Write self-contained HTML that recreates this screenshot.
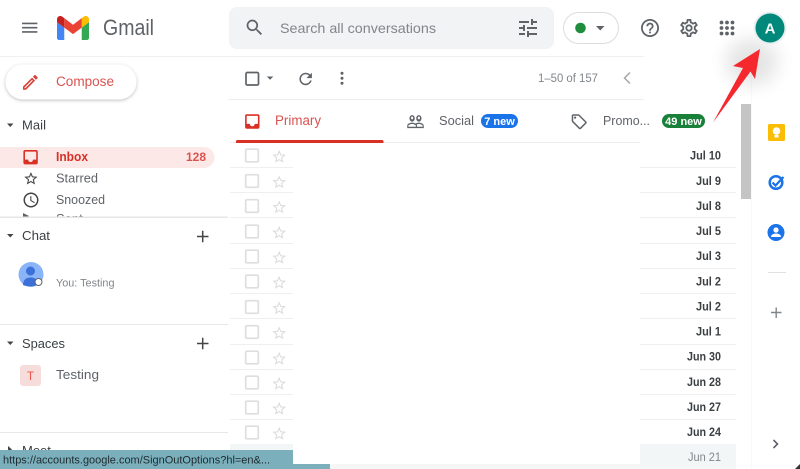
<!DOCTYPE html>
<html><head><meta charset="utf-8"><title>Gmail</title>
<style>
html,body{margin:0;padding:0;background:#fff;width:800px;height:469px;overflow:hidden}
svg{display:block;position:absolute;left:0;top:0}
text{font-family:"Liberation Sans",sans-serif}
</style></head><body>
<svg width="800" height="469" viewBox="0 0 800 469" xmlns="http://www.w3.org/2000/svg">
<defs>
<filter id="sh" x="-20%" y="-40%" width="140%" height="200%"><feDropShadow dx="0" dy="1" stdDeviation="1.5" flood-color="#3c4043" flood-opacity=".35"/></filter>
<filter id="bl" x="-50%" y="-50%" width="200%" height="200%"><feGaussianBlur stdDeviation="9"/></filter>
<path id="star" d="M22 9.240l-7.190-.62L12 2 9.190 8.630 2 9.240l5.460 4.730L5.820 21 12 17.270 18.180 21l-1.630-7.030L22 9.240zM12 15.400l-3.760 2.270 1-4.280-3.320-2.880 4.380-.38L12 6.100l1.710 4.040 4.380.38-3.320 2.880 1 4.280L12 15.400z"/>
<g id="rw"><rect x="245.700" y="-5.800" width="12.600" height="12.600" rx="1.200" fill="none" stroke="#dedede" stroke-width="1.700"/><use href="#star" fill="#dcdcdc" transform="translate(271 -6.500) scale(.68)"/></g>
<path id="inb" d="M19 3H5c-1.100 0-2 .9-2 2v14c0 1.100.9 2 2 2h14c1.100 0 2-.9 2-2V5c0-1.100-.9-2-2-2zm0 12h-4c0 1.660-1.340 3-3 3s-3-1.340-3-3H5V5h14v10z"/>
</defs>

<!-- row separators -->
<g stroke="#eef0f0" stroke-width="1">
<path d="M230 167.500H293M640 167.500H736M230 192.500H293M640 192.500H736M230 217.500H293M640 217.500H736M230 243.500H293M640 243.500H736M230 268.500H293M640 268.500H736M230 293.500H293M640 293.500H736M230 318.500H293M640 318.500H736M230 344.500H293M640 344.500H736M230 369.500H293M640 369.500H736M230 394.500H293M640 394.500H736M230 419.500H293M640 419.500H736"/>
</g>
<rect x="640" y="444" width="96" height="25" fill="#f2f6f6"/>
<rect x="230" y="444" width="63" height="7" fill="#f2f6f6"/>

<!-- rows -->
<use href="#rw" y="155"/><use href="#rw" y="180.500"/><use href="#rw" y="205.500"/><use href="#rw" y="231"/><use href="#rw" y="256"/><use href="#rw" y="281"/><use href="#rw" y="306.500"/><use href="#rw" y="331.500"/><use href="#rw" y="357"/><use href="#rw" y="382"/><use href="#rw" y="407"/><use href="#rw" y="432"/>
<g font-size="12" font-weight="700" fill="#3c4043" text-anchor="end" lengthAdjust="spacingAndGlyphs">
<text x="721" y="159.500" textLength="31" lengthAdjust="spacingAndGlyphs">Jul 10</text><text x="721" y="185" textLength="25" lengthAdjust="spacingAndGlyphs">Jul 9</text><text x="721" y="210" textLength="25" lengthAdjust="spacingAndGlyphs">Jul 8</text><text x="721" y="235" textLength="25" lengthAdjust="spacingAndGlyphs">Jul 5</text><text x="721" y="260" textLength="25" lengthAdjust="spacingAndGlyphs">Jul 3</text><text x="721" y="285.500" textLength="25" lengthAdjust="spacingAndGlyphs">Jul 2</text><text x="721" y="310.500" textLength="25" lengthAdjust="spacingAndGlyphs">Jul 2</text><text x="721" y="335.500" textLength="25" lengthAdjust="spacingAndGlyphs">Jul 1</text><text x="721" y="360.500" textLength="34" lengthAdjust="spacingAndGlyphs">Jun 30</text><text x="721" y="386" textLength="34" lengthAdjust="spacingAndGlyphs">Jun 28</text><text x="721" y="411" textLength="34" lengthAdjust="spacingAndGlyphs">Jun 27</text><text x="721" y="436" textLength="34" lengthAdjust="spacingAndGlyphs">Jun 24</text>
<text x="721" y="461" font-weight="400" fill="#80868b" textLength="33" lengthAdjust="spacingAndGlyphs">Jun 21</text>
</g>

<!-- scrollbar -->
<rect x="741" y="104" width="10" height="95" fill="#c4c4c4"/>
<rect x="751" y="57" width="1" height="412" fill="#f9f9f9"/>

<!-- header -->
<rect x="0" y="56" width="644" height="1" fill="#eff0f0"/>
<path transform="translate(19.500 17.500) scale(.85)" fill="#5f6368" d="M3 18h18v-2H3v2zm0-5h18v-2H3v2zm0-7v2h18V6H3z"/>
<g transform="translate(57 16) scale(.3636) translate(-52 -42)">
<path fill="#4285f4" d="M58 108h14V74L52 59v43c0 3.320 2.690 6 6 6"/>
<path fill="#34a853" d="M120 108h14c3.320 0 6-2.690 6-6V59l-20 15"/>
<path fill="#fbbc04" d="M120 48v26l20-15v-8c0-7.420-8.470-11.650-14.400-7.200"/>
<path fill="#ea4335" d="M72 74V48l24 18 24-18v26L96 92"/>
<path fill="#c5221f" d="M52 51v8l20 15V48l-5.600-4.200c-5.940-4.450-14.400-.22-14.400 7.200"/>
</g>
<text x="103" y="35" font-size="22" fill="#5f6368" textLength="51" lengthAdjust="spacingAndGlyphs">Gmail</text>

<rect x="229" y="7" width="325" height="42" rx="8" fill="#f1f3f4"/>
<path transform="translate(244 17) scale(.88)" fill="#5f6368" d="M15.500 14h-.79l-.28-.27A6.471 6.471 0 0 0 16 9.500 6.500 6.500 0 1 0 9.500 16c1.610 0 3.090-.59 4.230-1.570l.27.28v.79l5 4.990L20.490 19l-4.990-5zm-6 0C7.010 14 5 11.990 5 9.500S7.010 5 9.500 5 14 7.010 14 9.500 11.990 14 9.500 14z"/>
<text x="280" y="33" font-size="14" fill="#80868b" textLength="156" lengthAdjust="spacingAndGlyphs">Search all conversations</text>
<path transform="translate(516 16)" fill="#5f6368" d="M3 17v2h6v-2H3zM3 5v2h10V5H3zm10 16v-2h8v-2h-8v-2h-2v6h2zM7 9v2H3v2h4v2h2V9H7zm14 4v-2H11v2h10zm-6-4h2V7h4V5h-4V3h-2v6z"/>

<rect x="563.500" y="12.500" width="55" height="31" rx="15.500" fill="#fff" stroke="#dadce0"/>
<circle cx="580.500" cy="28" r="5.300" fill="#1e8e3e"/>
<path d="M596 26h8.500l-4.250 4.500z" fill="#5f6368"/>

<path transform="translate(639.200 17.200) scale(.9)" fill="#5f6368" d="M11 18h2v-2h-2v2zm1-16C6.480 2 2 6.480 2 12s4.480 10 10 10 10-4.480 10-10S17.520 2 12 2zm0 18c-4.410 0-8-3.590-8-8s3.590-8 8-8 8 3.590 8 8-3.590 8-8 8zm0-14c-2.210 0-4 1.790-4 4h2c0-1.100.9-2 2-2s2 .9 2 2c0 2-3 1.750-3 5h2c0-2.250 3-2.500 3-5 0-2.210-1.790-4-4-4z"/>
<path transform="translate(678.200 17.200) scale(.9)" fill="#5f6368" d="M19.430 12.980c.04-.32.07-.64.07-.98 0-.34-.03-.66-.07-.98l2.110-1.650c.19-.15.24-.42.12-.64l-2-3.460c-.09-.16-.26-.25-.44-.25-.06 0-.12.01-.17.03l-2.490 1c-.52-.4-1.080-.73-1.690-.98l-.38-2.650C14.460 2.180 14.250 2 14 2h-4c-.25 0-.46.180-.49.420l-.38 2.650c-.61.250-1.170.590-1.690.980l-2.490-1c-.06-.02-.12-.03-.18-.03-.17 0-.34.090-.43.250l-2 3.460c-.13.220-.07.490.12.640l2.110 1.650c-.04.320-.07.650-.07.980 0 .330.030.660.070.980l-2.110 1.650c-.19.150-.24.420-.12.640l2 3.460c.09.160.260.250.440.250.060 0 .120-.01.170-.03l2.490-1c.520.4 1.080.730 1.690.980l.380 2.650c.030.240.240.420.490.420h4c.250 0 .460-.18.490-.42l.380-2.650c.610-.25 1.170-.59 1.690-.98l2.490 1c.060.020.120.030.180.030.170 0 .340-.09.430-.25l2-3.460c.120-.22.070-.49-.12-.64l-2.110-1.650zm-1.980-1.710c.04.310.05.520.05.730 0 .210-.02.430-.05.730l-.14 1.130.89.700 1.080.840-.7 1.210-1.270-.51-1.040-.42-.9.680c-.43.320-.84.560-1.250.730l-1.060.430-.16 1.130-.2 1.350h-1.400l-.19-1.350-.16-1.130-1.060-.43c-.43-.18-.83-.41-1.230-.71l-.91-.7-1.060.430-1.270.510-.7-1.210 1.080-.84.890-.7-.14-1.130c-.03-.31-.05-.54-.05-.74s.02-.43.05-.73l.14-1.130-.89-.7-1.080-.84.7-1.210 1.270.510 1.040.420.9-.68c.43-.32.84-.56 1.250-.73l1.060-.43.16-1.130.2-1.350h1.390l.19 1.350.16 1.130 1.060.430c.43.180.83.410 1.230.710l.91.700 1.060-.43 1.270-.51.7 1.210-1.070.850-.89.700.14 1.130zM12 8c-2.210 0-4 1.790-4 4s1.790 4 4 4 4-1.790 4-4-1.790-4-4-4zm0 6c-1.100 0-2-.9-2-2s.9-2 2-2 2 .9 2 2-.9 2-2 2z"/>
<g fill="#5f6368"><circle cx="721.500" cy="22.500" r="1.900"/><circle cx="727" cy="22.500" r="1.900"/><circle cx="732.500" cy="22.500" r="1.900"/><circle cx="721.500" cy="28" r="1.900"/><circle cx="727" cy="28" r="1.900"/><circle cx="732.500" cy="28" r="1.900"/><circle cx="721.500" cy="33.500" r="1.900"/><circle cx="727" cy="33.500" r="1.900"/><circle cx="732.500" cy="33.500" r="1.900"/></g>

<!-- avatar -->
<ellipse cx="752" cy="62" rx="26" ry="24" fill="#000" opacity=".10" filter="url(#bl)"/>
<circle cx="770" cy="28" r="16.500" fill="#e9eff0"/>
<circle cx="770" cy="28" r="14.500" fill="#00897b"/>
<text x="770" y="33.500" font-size="15" font-weight="700" fill="#f4fbfa" text-anchor="middle">A</text>

<!-- sidebar -->
<rect x="5.500" y="64.500" width="131" height="35" rx="17.500" fill="#fff" filter="url(#sh)"/>
<path transform="translate(20.500 72.500) scale(.82)" fill="#d9423a" d="M14.060 9.020l.92.920L5.920 19H5v-.92l9.060-9.060M17.660 3c-.25 0-.51.100-.7.290l-1.830 1.830 3.750 3.750 1.830-1.830c.39-.39.39-1.020 0-1.410l-2.340-2.340c-.2-.2-.45-.29-.71-.29zm-3.600 3.190L3 17.250V21h3.750L17.810 9.940l-3.750-3.750z"/>
<text x="56" y="86" font-size="13.500" fill="#d9534f" textLength="58" lengthAdjust="spacingAndGlyphs">Compose</text>

<path d="M7 123.500h6.500l-3.250 3.500z" fill="#444"/>
<text x="22" y="129.500" font-size="13" fill="#3c4043" textLength="24">Mail</text>

<path d="M0 147H204a10.500 10.500 0 0 1 0 21H0z" fill="#fce8e6"/>
<use href="#inb" fill="#d93025" transform="translate(21 147.600) scale(.8)"/>
<text x="56" y="161" font-size="12.500" font-weight="700" fill="#d93025" textLength="32" lengthAdjust="spacingAndGlyphs">Inbox</text>
<text x="206" y="161" font-size="12" font-weight="700" fill="#d9534f" text-anchor="end">128</text>

<use href="#star" fill="#444" transform="translate(23 170.700) scale(.66)"/>
<text x="56" y="182.500" font-size="13" fill="#5f6368" textLength="42" lengthAdjust="spacingAndGlyphs">Starred</text>
<path transform="translate(22 191) scale(.75)" fill="#444" d="M11.990 2C6.470 2 2 6.480 2 12s4.470 10 9.990 10C17.520 22 22 17.520 22 12S17.520 2 11.990 2zM12 20c-4.420 0-8-3.580-8-8s3.580-8 8-8 8 3.580 8 8-3.580 8-8 8zm.5-13H11v6l5.250 3.150.75-1.230-4.500-2.670z"/>
<text x="56" y="204" font-size="13" fill="#5f6368" textLength="49" lengthAdjust="spacingAndGlyphs">Snoozed</text>
<text x="56" y="223" font-size="13" fill="#5f6368">Sent</text>
<path d="M23 213l6 3 -6 3z" fill="#5f6368"/>

<rect x="0" y="217" width="228" height="252" fill="#fff"/>
<rect x="0" y="216.500" width="228" height="1.500" fill="#e6e6e6"/>

<path d="M7 234h6.500l-3.250 3.500z" fill="#444"/>
<text x="22" y="240" font-size="13" fill="#3c4043" textLength="28" lengthAdjust="spacingAndGlyphs">Chat</text>
<path d="M197 236.500h11.500M202.700 230.700v11.500" stroke="#444" stroke-width="1.500" fill="none"/>
<circle cx="31" cy="274.500" r="12.500" fill="#8ab4f8"/>
<circle cx="30.500" cy="271" r="4.500" fill="#3c6fd8"/>
<path d="M23 285c0-5 3-7.500 7.500-7.500 3 0 5 1 6 2.500l-1 5.500c-4 1.500-9 1-12.500-.5z" fill="#3c6fd8"/>
<circle cx="38.500" cy="282" r="3.500" fill="#fff" stroke="#5f6368" stroke-width="1"/>
<text x="56" y="286.500" font-size="11" fill="#80868b" textLength="58.500" lengthAdjust="spacingAndGlyphs">You: Testing</text>

<rect x="0" y="324" width="228" height="1" fill="#e8e8e8"/>
<path d="M7 341.500h6.500l-3.250 3.500z" fill="#444"/>
<text x="22" y="348" font-size="13" fill="#3c4043" textLength="43" lengthAdjust="spacingAndGlyphs">Spaces</text>
<path d="M197 343.500h11.500M202.700 337.700v11.500" stroke="#444" stroke-width="1.500" fill="none"/>
<rect x="20" y="365" width="21" height="21" rx="3" fill="#f6dcda"/>
<text x="30.500" y="380" font-size="11.500" fill="#ef5350" text-anchor="middle">T</text>
<text x="56" y="379" font-size="13" fill="#5f6368" textLength="43" lengthAdjust="spacingAndGlyphs">Testing</text>
<rect x="0" y="432" width="228" height="1" fill="#e8e8e8"/>
<path d="M8 446l4 3.500-4 3.500z" fill="#444"/>
<text x="22" y="455" font-size="13" fill="#3c4043">Meet</text>

<!-- toolbar -->
<rect x="246" y="72.500" width="12.500" height="12.500" rx="1.300" fill="none" stroke="#5f6368" stroke-width="1.700"/>
<path d="M266.800 76.500h6.500l-3.250 3.200z" fill="#5f6368"/>
<path transform="translate(296.300 69.600) scale(.78)" fill="#5f6368" d="M17.650 6.350A7.958 7.958 0 0 0 12 4c-4.420 0-7.990 3.580-7.990 8s3.570 8 7.990 8c3.730 0 6.840-2.550 7.730-6h-2.080A5.990 5.990 0 0 1 12 18c-3.310 0-6-2.690-6-6s2.690-6 6-6c1.660 0 3.140.690 4.220 1.780L13 11h7V4l-2.350 2.350z"/>
<g fill="#5f6368"><circle cx="342" cy="73.300" r="1.500"/><circle cx="342" cy="78.300" r="1.500"/><circle cx="342" cy="83.300" r="1.500"/></g>
<text x="538" y="82" font-size="11.500" fill="#80868b" textLength="60" lengthAdjust="spacingAndGlyphs">1–50 of 157</text>
<path d="M630 72.500l-5.500 5.500 5.500 5.500" fill="none" stroke="#a3a6a9" stroke-width="1.500"/>
<rect x="228" y="99" width="416" height="1" fill="#eceded"/>

<!-- tabs -->
<rect x="230" y="142" width="410" height="1" fill="#eceded"/>
<use href="#inb" fill="#d93025" transform="translate(242.700 111.900) scale(.8)"/>
<text x="275" y="125" font-size="13.500" fill="#d9534f" textLength="46" lengthAdjust="spacingAndGlyphs">Primary</text>
<path d="M236 142v-.5a1.500 1.500 0 0 1 1.500-1.500H382a1.500 1.500 0 0 1 1.500 1.500V143H236z" fill="#d93025"/>
<path transform="translate(406.500 110.500) scale(.75 .93)" fill="#5f6368" d="M16.500 13c-1.200 0-3.070.340-4.500 1-1.430-.67-3.300-1-4.500-1C5.330 13 1 14.080 1 16.250V19h22v-2.750c0-2.170-4.330-3.250-6.500-3.250zm-4 4.500h-10v-1.250c0-.54 2.560-1.750 5-1.750s5 1.210 5 1.750v1.250zm9 0H14v-1.250c0-.46-.2-.86-.52-1.220.88-.3 1.960-.53 3.020-.53 2.440 0 5 1.210 5 1.750v1.250zM7.500 12c1.930 0 3.500-1.570 3.500-3.500S9.430 5 7.500 5 4 6.570 4 8.500 5.570 12 7.500 12zm0-5.500c.83 0 1.500.67 1.500 1.500s-.67 1.500-1.500 1.500S6 8.830 6 8s.67-1.500 1.500-1.500zm9 5.500c1.930 0 3.500-1.570 3.500-3.500S18.430 5 16.500 5 13 6.570 13 8.500s1.570 3.500 3.500 3.500zm0-5.500c.83 0 1.500.67 1.500 1.500s-.67 1.500-1.500 1.500S15 8.830 15 8s.67-1.500 1.500-1.500z"/>
<text x="439" y="125" font-size="13" fill="#5f6368" textLength="35" lengthAdjust="spacingAndGlyphs">Social</text>
<rect x="481" y="114" width="37" height="14" rx="7" fill="#1a73e8"/>
<text x="499.500" y="125" font-size="11" font-weight="700" fill="#fff" text-anchor="middle">7 new</text>
<g transform="translate(570.200 112.800) scale(.75)"><path fill="#5f6368" d="M21.410 11.580l-9-9C12.050 2.220 11.550 2 11 2H4c-1.100 0-2 .9-2 2v7c0 .55.220 1.050.59 1.420l9 9c.36.360.86.580 1.410.580s1.050-.22 1.410-.59l7-7c.37-.36.59-.86.59-1.410s-.23-1.060-.59-1.420zM13 20.010L4 11V4h7v-.01l9 8.990-7 7.030z"/><circle cx="6.500" cy="6.500" r="1.500" fill="#5f6368"/></g>
<text x="603" y="125" font-size="13" fill="#5f6368" textLength="47" lengthAdjust="spacingAndGlyphs">Promo...</text>
<rect x="662" y="114" width="43" height="14" rx="7" fill="#188038"/>
<text x="683.500" y="125" font-size="11" font-weight="700" fill="#fff" text-anchor="middle">49 new</text>

<!-- arrow -->
<path d="M713 122.500L743 68 733 66 760 49 755 79 750.500 71.500z" fill="#f5282e"/>

<!-- right panel -->
<rect x="768" y="124" width="17" height="17" rx="1.500" fill="#fbbc04"/>
<circle cx="776.500" cy="131" r="3.800" fill="#fff"/>
<rect x="774.500" y="135" width="4" height="2.500" fill="#fff"/>
<circle cx="776" cy="182.500" r="6.300" fill="none" stroke="#1a73e8" stroke-width="2.500"/>
<path d="M772.500 182.500l3 3 8-8.500" fill="none" stroke="#1a73e8" stroke-width="2.200"/>
<circle cx="776" cy="232.500" r="8.500" fill="#1a73e8"/>
<circle cx="776" cy="230" r="2.600" fill="#fff"/>
<path d="M771 237c0-2.500 2.500-3.500 5-3.500s5 1 5 3.500z" fill="#fff"/>
<rect x="768" y="272" width="18" height="1" fill="#dfe1e3"/>
<path d="M771 312.500h10.500M776.200 307.500v10.500" stroke="#80868b" stroke-width="1.400" fill="none"/>
<path d="M773.500 440l4 4-4 4" fill="none" stroke="#5f6368" stroke-width="1.600"/>

<!-- status bubble -->
<rect x="293" y="464" width="37" height="5" fill="#7aafbb"/>
<rect x="330" y="464" width="310" height="5" fill="#f5f7f7"/>
<path d="M800 464v5h-5z" fill="#333"/>
<rect x="0" y="450" width="293" height="19" fill="#7aafbb"/>
<text x="3" y="463.500" font-size="11" fill="#1d2b30" textLength="267" lengthAdjust="spacingAndGlyphs">https://accounts.google.com/SignOutOptions?hl=en&amp;...</text>
</svg>
</body></html>
